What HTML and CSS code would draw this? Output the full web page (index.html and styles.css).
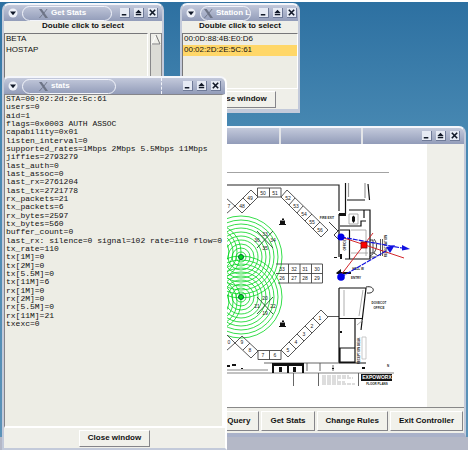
FILE: index.html
```
<!DOCTYPE html>
<html lang="en">
<head>
<meta charset="utf-8">
<title>Controller</title>
<link rel="stylesheet" href="styles.css">
</head>
<body>
<svg class="defs" aria-hidden="true">
  <symbol id="x" viewBox="0 0 10 10"><path d="M0 0H3L10 10H7Z" fill="#6d7486"/><path d="M9 0L5.5 4.500M4 6L.5 10" stroke="#6d7486"/></symbol>
  <symbol id="menu" viewBox="0 0 10 10"><circle cx="5" cy="5" r="4.500" fill="#eef1f8"/><path d="M2 3.500H8L5 7.200Z" fill="#101828"/></symbol>
  <symbol id="min" viewBox="0 0 10 10"><path d="M2 7.500H7" stroke="#111827" stroke-width="1.500"/></symbol>
  <symbol id="max" viewBox="0 0 10 10"><path d="M1.500 5.500L5 2L8.500 5.500ZM2 6.500H8V8H2Z" fill="#111827"/></symbol>
  <symbol id="close" viewBox="0 0 10 10"><path d="M2 2L8 8M8 2L2 8" stroke="#111827" stroke-width="1.800"/></symbol>
</svg>
<main class="desktop">
  <div class="panel"></div>

  <section class="window controller">
    <header class="titlebar">
      <div class="tabs"><span class="tab"></span><span class="tab"></span><span class="tab"></span></div>
      <button class="tool" aria-label="Minimize"><svg><use href="#min"/></svg></button>
      <button class="tool" aria-label="Maximize"><svg><use href="#max"/></svg></button>
      <button class="tool" aria-label="Close"><svg><use href="#close"/></svg></button>
    </header>
    <div class="canvas">
      <svg class="map" viewBox="226 143 201 263" role="img" aria-label="Floor plan">
        <rect x="226" y="143" width="201" height="263" fill="#fff"/>
        <g fill="none" stroke="#00d51c" stroke-width=".8">
          <g id="rings"><circle cx="241" cy="256" r="5"/><circle cx="241" cy="256" r="9"/><circle cx="241" cy="256" r="13"/><circle cx="241" cy="256" r="17"/><circle cx="241" cy="256" r="21"/><circle cx="241" cy="256" r="25"/><circle cx="241" cy="256" r="29"/><circle cx="241" cy="256" r="33"/><circle cx="241" cy="256" r="37"/><circle cx="241" cy="256" r="41"/></g>
          <use href="#rings" y="40"/>
          <circle cx="213" cy="251" r="16"/><circle cx="213" cy="251" r="20"/><circle cx="213" cy="251" r="24"/><circle cx="213" cy="251" r="28"/>
          <circle cx="213" cy="301" r="16"/><circle cx="213" cy="301" r="20"/><circle cx="213" cy="301" r="24"/><circle cx="213" cy="301" r="28"/>
        </g>
        <g fill="#00e01c" stroke="#063" stroke-width="1"><circle cx="241" cy="256" r="2.500"/><circle cx="241" cy="296" r="2.500"/></g>
        <g fill="none" stroke="#444" stroke-width=".9">
          <path d="M226 171.500H389" stroke="#999"/>
          <path d="M226 184H339V210" stroke="#222" stroke-width="1.200"/>
          <path d="M257.500 187H281V196H257.500ZM269.500 187V196"/>
          <path d="M287 189L328 229L321 236L281 196ZM295 197L289 204M303 205L297 212M312 213L305 220M320 221L313 228"/>
          <path d="M251 189L258 196L242 212L235 205ZM243 197L250 204M226 197L235 205L226 213"/>
          <path d="M276 263H322.500V282H278M276 272.500H322.500M288.500 263V282M300 263V282M311.500 263V282"/>
          <path d="M258 349.500H281V358.500H258ZM269.500 349.500V358.500"/>
          <path d="M281 349L321 309L328 316L288 356ZM289 341L296 348M297 333L304 340M305 325L312 332M313 317L320 324"/>
          <path d="M242 335L258 350L251 357L235 342ZM250 342L243 349M226 333L235 342L226 350"/>
          <path d="M257 230L273 247M273 230L257 247M257 296L273 313M273 296L257 313" stroke="#175a22"/>
          <path d="M328 315.500H339"/>
          <path d="M226 369H268M226 372H394" stroke="#777"/>
          <path d="M264 362H338M307 362V370M320 362V370M293.500 372V385M318.500 372V385M358.500 372V385M333 364V370" stroke="#555"/>
        </g>
        <g fill="none" stroke="#111" stroke-width="1.200">
          <path d="M339 287H366L361 329M339 287V362H366M339 317.500H362M355 317V362M340 347H355V361H340Z"/>
          <path d="M344 289V315M363 289L359 315M357 324L363 319" stroke="#999" stroke-width=".8"/>
          <path d="M366 286C375 284 376 293 367 292" stroke-width=".9"/>
          <path d="M362 336H366V358H362Z" stroke="#bbb" stroke-width=".8"/>
          <path d="M345.500 182V213M347 199H365M368 183L369.500 199"/>
          <path d="M348.500 182V196M365 182V197" stroke="#999"/>
          <path d="M349 209H370V258H345M340 225H361V220H366M364 209V217M339 213V256M340 229H349.500V258"/>
          <path d="M349 213H358V223H349ZM351 229H366V255M351 252H368" stroke="#999" stroke-width=".8"/>
          <path d="M339 229L334 234L339 239M329 221L338 230M370 239H373V252H370M374 238C379 244 376 252 370 255M374 252L378 255" stroke-width=".8"/>
          <path d="M380.500 238V255M382.500 238V255M369 256H375" stroke="#333" stroke-width=".8"/>
        </g>
        <g fill="#111">
          <path d="M339 212H346V215H339ZM352 216L353.500 214.500L355 216V220L353.500 222L352 220Z"/>
          <path d="M334 256H337V257H334ZM340 253H342V258H340ZM340 330H342V332H340ZM332 367H334V368H332ZM362 366H365V368H362Z"/>
          <path d="M336 272L341 268V271H351V273H337Z"/>
          <path d="M280 219.500H285V223H280ZM282 217.500H284V219H282ZM279 223H286V224H279ZM280 321.500H285V325H280ZM282 319.500H284V321H282ZM279 325H286V326H279Z"/>
          <path d="M272 362H304V372H302V365H289V372H287V365H274V372H272Z"/>
          <path d="M279 366H282V371H279ZM293 366H296V371H293ZM226 364H230V366H226ZM232 363H236V365H232ZM241 367H243V368H241Z"/>
          <rect x="361" y="373" width="31" height="7"/>
        </g>
        <g class="booths">
          <text x="229" y="207">7</text><text x="242" y="207">48</text><text x="250" y="199">49</text><text x="263" y="194">50</text><text x="275" y="194">51</text>
          <text x="288" y="199">52</text><text x="296" y="207">53</text><text x="304" y="215">54</text><text x="312" y="223">55</text><text x="320" y="231">56</text>
          <text x="282" y="270">33</text><text x="294" y="270">32</text><text x="305" y="270">31</text><text x="317" y="270">30</text>
          <text x="282" y="279">26</text><text x="294" y="279">27</text><text x="305" y="279">28</text><text x="317" y="279">29</text>
          <text x="229" y="343">0</text><text x="242" y="343">9</text><text x="250" y="351">8</text><text x="263" y="356">7</text><text x="275" y="356">6</text>
          <text x="288" y="351">5</text><text x="296" y="343">4</text><text x="304" y="335">3</text><text x="312" y="327">2</text><text x="320" y="319">1</text>
          <text x="265" y="235">33</text><text x="257" y="241">36</text><text x="273" y="241">34</text><text x="265" y="249">35</text>
          <text x="265" y="299">20</text><text x="257" y="307">21</text><text x="273" y="307">22</text><text x="265" y="314">19</text>
        </g>
        <g class="notes">
          <text x="327" y="218">FIRE EXIT</text><text x="358" y="269">HALL W</text><text x="356" y="278">ENTRY</text>
          <text x="379" y="303">DOVECOT</text><text x="379" y="308">OFFICE</text>
          <text transform="translate(346 244) rotate(-90)">OFFICE</text>
          <text transform="translate(387 245) rotate(-90)">REGISTRATION</text>
          <text transform="translate(360 350) rotate(-90)">RECEPTION DESK</text>
          <text x="388" y="366">N</text>
          <text x="377" y="384">FLOOR PLANS</text>
        </g>
        <path d="M322 375H349M322 377H353M322 379H338M322 381H345M322 383H355" stroke="#aaa" stroke-width=".8" stroke-dasharray="4 1"/>
        <text class="brand" x="377" y="378">EXPOWORX</text>
        <path d="M341 236L404 257M341 274L373 232" stroke="#d3262b" fill="none"/>
        <path d="M341 236L402 247M341 276L386 250" stroke="#1111e0" stroke-width="1.200" stroke-dasharray="5 1" fill="none"/>
        <path d="M402 244L410 248L402 249.500ZM386 246L395 244L390 252Z" fill="#1111e0"/>
        <circle cx="341" cy="236" r="3.500" fill="#0000e8"/><circle cx="341" cy="276" r="3.800" fill="#0000e8"/>
        <rect x="361" y="241" width="6" height="6" fill="#f00" stroke="#801010" stroke-width=".8"/>
      </svg>
    </div>
    <footer class="actions">
      <button class="btn">Query</button><button class="btn">Get Stats</button><button class="btn">Change Rules</button><button class="btn">Exit Controller</button>
    </footer>
  </section>

  <section class="window getstats">
    <header class="titlebar">
      <button class="menu" aria-label="Window menu"><svg><use href="#menu"/></svg></button>
      <h1 class="pill wide"><svg><use href="#x"/></svg>Get Stats</h1>
      <span class="fill"></span>
      <button class="tool" aria-label="Minimize"><svg><use href="#min"/></svg></button>
      <button class="tool" aria-label="Maximize"><svg><use href="#max"/></svg></button>
      <button class="tool" aria-label="Close"><svg><use href="#close"/></svg></button>
    </header>
    <label class="prompt" for="aps">Double click to select</label>
    <div class="chooser">
      <select class="list" id="aps" size="5"><option>BETA</option><option>HOSTAP</option></select>
      <div class="scroll"><svg viewBox="0 0 10 11"><path d="M5 1L1 10H9" fill="none" stroke="#fff"/><path d="M5 1L9 10H1" fill="none" stroke="#777"/></svg></div>
    </div>
  </section>

  <section class="window stations">
    <header class="titlebar">
      <button class="menu" aria-label="Window menu"><svg><use href="#menu"/></svg></button>
      <h1 class="pill snug"><svg><use href="#x"/></svg>Station L</h1>
      <span class="fill"></span>
      <button class="tool" aria-label="Minimize"><svg><use href="#min"/></svg></button>
      <button class="tool" aria-label="Maximize"><svg><use href="#max"/></svg></button>
      <button class="tool" aria-label="Close"><svg><use href="#close"/></svg></button>
    </header>
    <label class="prompt" for="stas">Double click to select</label>
    <div class="chooser">
      <select class="list" id="stas" size="4"><option>00:0D:88:4B:E0:D6</option><option selected>00:02:2D:2E:5C:61</option></select>
    </div>
    <footer class="dismiss"><button class="btn">Close window</button></footer>
  </section>

  <section class="window stats">
    <header class="titlebar">
      <button class="menu" aria-label="Window menu"><svg><use href="#menu"/></svg></button>
      <h1 class="pill wide"><svg><use href="#x"/></svg>stats</h1>
      <span class="fill"><i class="seam"></i></span>
      <button class="tool" aria-label="Minimize"><svg><use href="#min"/></svg></button>
      <button class="tool" aria-label="Maximize"><svg><use href="#max"/></svg></button>
      <button class="tool" aria-label="Close"><svg><use href="#close"/></svg></button>
    </header>
    <div class="output">
      <ul class="lines">
        <li>STA=00:02:2d:2e:5c:61</li><li>users=0</li><li>aid=1</li><li>flags=0x0003 AUTH ASSOC</li><li>capability=0x01</li><li>listen_interval=0</li><li>supported_rates=1Mbps 2Mbps 5.5Mbps 11Mbps</li><li>jiffies=2793279</li><li>last_auth=0</li><li>last_assoc=0</li><li>last_rx=2761204</li><li>last_tx=2721778</li><li>rx_packets=21</li><li>tx_packets=6</li><li>rx_bytes=2597</li><li>tx_bytes=560</li><li>buffer_count=0</li><li>last_rx: silence=0 signal=102 rate=110 flow=0</li><li>tx_rate=110</li><li>tx[1M]=0</li><li>tx[2M]=0</li><li>tx[5.5M]=0</li><li>tx[11M]=6</li><li>rx[1M]=0</li><li>rx[2M]=0</li><li>rx[5.5M]=0</li><li>rx[11M]=21</li><li>txexc=0</li>
      </ul>
    </div>
    <footer class="dismiss"><button class="btn">Close window</button></footer>
  </section>
</main>
</body>
</html>
```
FILE: styles.css
```
* { box-sizing: border-box; }
body { margin: 0; font: bold 8px/10px "Liberation Sans", sans-serif; color: #111; }
button, select { font: inherit; color: inherit; margin: 0; }
.defs { display: none; }

.desktop {
  position: relative;
  min-height: 100vh;
  overflow: hidden;
  border-top: 2px solid #fff;
  background: linear-gradient(#2d70a1, #4788b2 130px, #5c93b8);
}
.panel { position: absolute; left: 0; right: 0; bottom: 0; height: 13px; background: #b4b8c7; }

/* Window frame */
.window {
  position: absolute;
  display: flex;
  flex-direction: column;
  background: #efefe9;
  border: 2px solid #c3cada;
  border-top-color: #f4f6fb;
  border-radius: 7px 7px 0 0;
  overflow: hidden;
}
.titlebar {
  display: flex;
  align-items: center;
  gap: 4px;
  height: 16px;
  flex: none;
  padding: 0 4px;
  background: linear-gradient(#c3c9db, #929cb9);
}
.fill { display: flex; flex: 1; align-self: stretch; justify-content: center; }
.seam { border-left: 1px dashed #f2f4fa; margin-left: 24px; }
.menu, .tool {
  flex: none;
  width: 10px;
  height: 10px;
  padding: 0;
  border: 0;
  background: none;
  display: flex;
}
.menu svg, .tool svg { width: 100%; height: 100%; }
.tool { background: #e6eaf4; border-right: 1px solid #6f7a98; border-bottom: 1px solid #6f7a98; }
.pill {
  display: flex;
  align-items: center;
  gap: 3px;
  height: 15px;
  margin: 0;
  border: 1px solid #f2f4fa;
  border-radius: 8px;
  font: inherit;
  color: #fff;
  white-space: nowrap;
}
.pill svg { width: 9px; height: 9px; flex: none; }
.wide { width: 94px; padding-left: 16px; }
.snug { width: 54px; padding-left: 3px; }

/* Placement on the desktop */
.getstats { left: 2px; top: 1px; width: 162px; height: 110px; }
.stations { left: 180px; top: 1px; width: 120px; height: 110px; border-bottom-width: 4px; }
.stats { left: 2px; top: 74px; width: 225px; bottom: 0; border-right-color: #fff; }
.controller { left: 200px; right: 2px; top: 124px; bottom: 13px; border-bottom-width: 4px; border-bottom-color: #a9b1c9; }

/* Widgets */
.prompt { text-align: center; padding: 0 0 2px; flex: none; }
.chooser { display: flex; flex: 1; gap: 2px; min-height: 0; }
.list {
  flex: 1;
  min-width: 0;
  appearance: none;
  border: 1px solid #77777a;
  border-right-color: #fff;
  border-bottom-color: #fff;
  border-radius: 0;
  background: #edede5;
  padding: 0;
  overflow: hidden;
  outline: 0;
}
.list option { padding: 0 0 0 1px; min-height: 11px; line-height: 11px; color: #111; }
.list option:checked { background: #ffd768 linear-gradient(#ffd768, #ffd768); color: #111; }
.scroll { width: 12px; background: #dcdcd6; border: 1px solid #88888a; }
.scroll svg { display: block; width: 10px; height: 11px; background: #efefe9; }
.btn {
  height: 17px;
  padding: 0 8px;
  border: 1px solid #fff;
  border-right-color: #85858a;
  border-bottom-color: #85858a;
  border-radius: 0;
  background: #f1f1eb;
  white-space: nowrap;
}
.dismiss { display: flex; justify-content: center; align-items: center; flex: none; height: 20px; }

/* Statistics dump */
.output {
  flex: 1;
  min-height: 0;
  border: 1px solid #85858a;
  border-right: 3px solid #fff;
  border-bottom: 2px solid #fff;
  background: #edede5;
}
.lines {
  display: flex;
  flex-direction: column;
  justify-content: space-between;
  height: 233px;
  margin: 0;
  padding: 0 0 0 1px;
  list-style: none;
  font: 8px/8px "Liberation Mono", monospace;
  white-space: pre;
}

/* Controller */
.tabs { display: flex; flex: 1; justify-content: flex-end; align-self: stretch; min-width: 0; overflow: hidden; }
.tab { flex: none; width: 82px; border-right: 2px solid #e3e5e8; }
.tab:last-child { width: 55px; border: 0; }
.canvas { flex: 1; min-height: 0; padding-left: 24px; border-bottom: 1px solid #888; }
.map { display: block; width: 201px; height: 100%; background: #fff; }
.actions { display: flex; justify-content: flex-end; gap: 2px; flex: none; padding: 3px 1px 2px; }
.actions .btn { height: 20px; }
.booths { font: 5px "Liberation Sans", sans-serif; fill: #222; text-anchor: middle; }
.notes { font: bold 3px "Liberation Sans", sans-serif; fill: #222; text-anchor: middle; }
.brand { font: bold 5px "Liberation Sans", sans-serif; fill: #fff; text-anchor: middle; }
```
